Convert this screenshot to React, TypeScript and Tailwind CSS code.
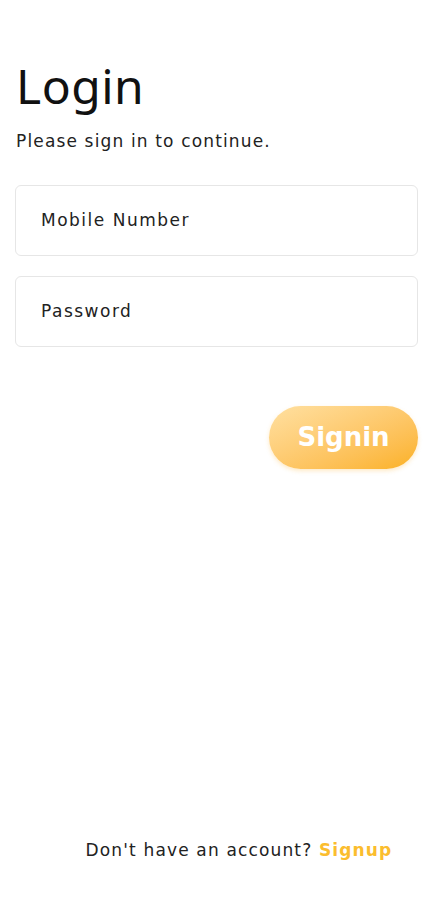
import React from "react";

export default function App() {
  return (
    <div
      className="w-[436px] h-[900px] bg-white flex flex-col text-[#111]"
      style={{ fontFamily: '"DejaVu Sans", "Noto Sans", sans-serif' }}
    >
      <div className="pl-[15px] pr-[18px] pt-[56px]">
        <h1
          className="text-[48px] leading-[60px] font-normal tracking-[0.5px] pl-[1px]"
          style={{ fontFamily: '"Noto Sans", sans-serif' }}
        >
          Login
        </h1>
        <p className="text-[17px] leading-[24px] mt-[13px] pl-[1px] tracking-[1.15px] text-[#222]">Please sign in to continue.</p>
        <div className="mt-[32px] flex flex-col gap-[20px]">
          <div className="h-[71px] rounded-[6px] border border-[#e6e6e6] flex items-center pl-[25px] text-[17px] tracking-[1.5px] text-[#222]">
            Mobile Number
          </div>
          <div className="h-[71px] rounded-[6px] border border-[#e6e6e6] flex items-center pl-[25px] text-[17px] tracking-[1.5px] text-[#222]">
            Password
          </div>
        </div>
        <div className="mt-[59px] flex justify-end">
          <button className="w-[149px] h-[63px] rounded-full bg-gradient-to-br from-[#ffe0a0] to-[#fbb11d] text-white text-[26px] font-semibold flex items-center justify-center shadow-[0_2px_4px_rgba(250,170,30,0.25)]">
            Signin
          </button>
        </div>
      </div>
      <div className="flex-1" />
      <div className="pb-[38px] flex justify-center pl-[42px]">
        <p className="text-[17px] leading-[24px] tracking-[1.15px] text-[#222]">
          Don't have an account? <span className="text-[#fbbd2e] font-bold">Signup</span>
        </p>
      </div>
    </div>
  );
}
